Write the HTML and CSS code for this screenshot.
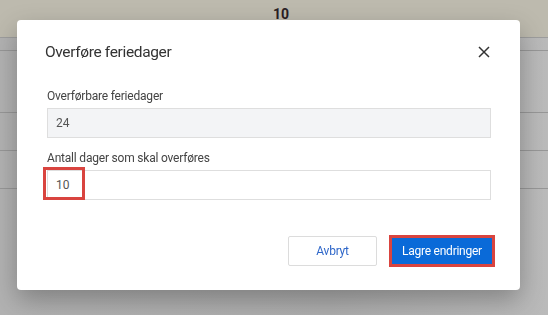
FILE: index.html
```html
<!DOCTYPE html>
<html lang="no">
<head>
    <meta charset="UTF-8">
    <meta name="viewport" content="width=device-width, initial-scale=1.0">
    <title>Overføre feriedager</title>
    <link rel="stylesheet" href="styles.css">
</head>
<body>

<!-- Bakgrunn (tabellen bak dialogen) -->
<div class="page">
    <div class="page-head">
        <span class="head-value">10</span>
    </div>
    <div class="page-row row-thin"></div>
    <div class="page-row row-tall"></div>
    <div class="page-row row-mid"></div>
    <div class="page-row row-mid"></div>
    <div class="page-rest"></div>
</div>

<div class="backdrop">
    <div class="dialog">
        <div class="dialog-header">
            <h2 class="dialog-title">Overføre feriedager</h2>
            <button class="close-btn" aria-label="Lukk">
                <svg width="12" height="12" viewBox="0 0 12 12">
                    <path d="M1 1 L11 11 M11 1 L1 11" stroke="#333" stroke-width="1.5" fill="none"/>
                </svg>
            </button>
        </div>

        <div class="field">
            <label class="field-label">Overførbare feriedager</label>
            <div class="input readonly">24</div>
        </div>

        <div class="field">
            <label class="field-label">Antall dager som skal overføres</label>
            <div class="input-wrap">
                <div class="input">10</div>
                <span class="mark"></span>
            </div>
        </div>

        <div class="dialog-footer">
            <button class="btn btn-cancel">Avbryt</button>
            <button class="btn btn-save">Lagre endringer</button>
        </div>
    </div>
</div>

</body>
</html>
```

FILE: styles.css
```css
body {
    margin: 0;
    padding: 0;
    font-family: Roboto, "Liberation Sans", sans-serif;
    overflow: hidden;
    height: 315px;
}

/* bakgrunn */
.page {
    height: 315px;
    background: linear-gradient(90deg, #b2b2b2, #aeaeae 60%, #bababa);
}

.page-head {
    height: 38px;
    background: #bdbaae;
    border-bottom: 1px solid #9d9d9d;
    box-sizing: border-box;
    display: flex;
    justify-content: center;
    align-items: flex-end;
}

.head-value {
    font-size: 14px;
    font-weight: bold;
    color: #2a1e24;
    margin-bottom: 15px;
    margin-left: 14px;
}

.page-row {
    border-bottom: 1px solid #979797;
    box-sizing: border-box;
}

.row-thin { height: 13px; }
.row-tall { height: 62px; }
.row-mid { height: 38px; }

/* dialog */
.backdrop {
    position: fixed;
    top: 0;
    left: 0;
    right: 0;
    bottom: 0;
}

.dialog {
    position: absolute;
    top: 20px;
    left: 17px;
    width: 503px;
    height: 270px;
    box-sizing: border-box;
    background: #fff;
    border-radius: 4px;
    padding: 22px 29px 24px 30px;
    box-shadow: 0 10px 26px rgba(0, 0, 0, 0.28);
    display: flex;
    flex-direction: column;
}

.dialog-header {
    display: flex;
    justify-content: space-between;
    align-items: center;
    height: 20px;
    margin-bottom: 26px;
}

.dialog-title {
    margin: 0 0 0 -2px;
    font-size: 15.5px;
    letter-spacing: -0.35px;
    font-weight: normal;
    color: #333;
}

.close-btn {
    border: none;
    background: none;
    padding: 0;
    width: 12px;
    height: 12px;
    display: flex;
    margin-right: 1px;
}

.field {
    display: flex;
    flex-direction: column;
    margin-bottom: 12px;
}

.field-label {
    font-size: 12px;
    letter-spacing: -0.2px;
    line-height: 16px;
    color: #444;
    margin-bottom: 4px;
}

.input {
    height: 30px;
    box-sizing: border-box;
    border: 1px solid #dedede;
    padding: 0 8px;
    font-size: 12px;
    line-height: 28px;
    color: #555;
    background: #fff;
}

.readonly {
    background: #f3f4f6;
}

.input-wrap {
    position: relative;
}

.mark {
    position: absolute;
    left: -4px;
    top: -3px;
    width: 42px;
    height: 33px;
    box-sizing: border-box;
    border: 3px solid #d9443f;
}

.dialog-footer {
    margin-top: auto;
    display: flex;
    justify-content: flex-end;
    align-items: center;
    gap: 15px;
}

.btn {
    font-family: inherit;
    font-size: 12px;
    letter-spacing: -0.25px;
    height: 30px;
    padding: 0;
    border-radius: 2px;
    cursor: pointer;
}

.btn-cancel {
    width: 89px;
    background: #fff;
    border: 1px solid #dcdcdc;
    color: #2f67c9;
}

.btn-save {
    width: 100px;
    height: 26px;
    background: #0a6ad8;
    border: none;
    border-radius: 0;
    color: #fff;
    outline: 3px solid #d9443f;
    margin-right: -1px;
}
```
